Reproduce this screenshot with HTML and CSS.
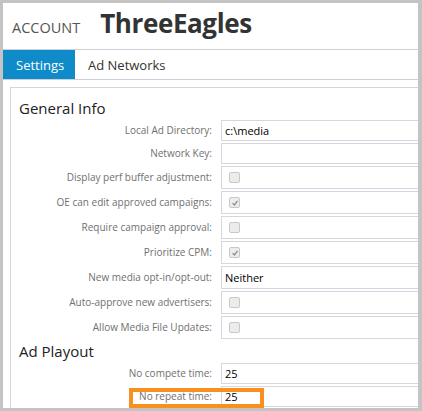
FILE: index.html
```html
<!DOCTYPE html>
<html>
<head>
<meta charset="utf-8">
<link rel="stylesheet" href="styles.css">
</head>
<body>
<div class="frame">
  <header class="header">
    <span class="account">ACCOUNT</span>
    <span class="name">ThreeEagles</span>
  </header>
  <nav class="tabs">
    <div class="tab active">Settings</div>
    <div class="tab">Ad Networks</div>
  </nav>
  <section class="panel">
    <h2 class="heading">General Info</h2>
    <div class="form">
      <div class="row short"><label>Local Ad Directory:</label><div class="field">c:\media</div></div>
      <div class="row short"><label>Network Key:</label><div class="field"></div></div>
      <div class="row"><label>Display perf buffer adjustment:</label><div class="field"><span class="cb"></span></div></div>
      <div class="row"><label>OE can edit approved campaigns:</label><div class="field"><span class="cb checked"><svg viewBox="0 0 10 10" width="8" height="8"><path d="M2 5.2 L4.2 7.4 L8.2 2.4" fill="none" stroke="#8a8a8a" stroke-width="1.6"/></svg></span></div></div>
      <div class="row"><label>Require campaign approval:</label><div class="field"><span class="cb"></span></div></div>
      <div class="row"><label>Prioritize CPM:</label><div class="field"><span class="cb checked"><svg viewBox="0 0 10 10" width="8" height="8"><path d="M2 5.2 L4.2 7.4 L8.2 2.4" fill="none" stroke="#8a8a8a" stroke-width="1.6"/></svg></span></div></div>
      <div class="row"><label>New media opt-in/opt-out:</label><div class="field">Neither</div></div>
      <div class="row"><label>Auto-approve new advertisers:</label><div class="field"><span class="cb"></span></div></div>
      <div class="row"><label>Allow Media File Updates:</label><div class="field"><span class="cb"></span></div></div>
    </div>
    <h2 class="heading playout">Ad Playout</h2>
    <div class="form">
      <div class="row short"><label>No compete time:</label><div class="field">25</div></div>
      <div class="row short highlight-row"><label>No repeat time:</label><div class="field">25</div><div class="highlight"></div></div>
    </div>
  </section>
</div>
</body>
</html>
```
FILE: styles.css
```css
html, body {
  margin: 0;
  padding: 0;
}
body {
  width: 422px;
  height: 411px;
  background: #c4c4c4;
  font-family: "Open Sans", "DejaVu Sans", sans-serif;
  overflow: hidden;
}
.frame {
  position: relative;
  margin: 3px 0 0 3px;
  width: 415px;
  height: 405px;
  background: #fff;
  overflow: hidden;
}
.header {
  height: 46px;
  display: flex;
  align-items: baseline;
  padding-left: 9px;
  box-sizing: border-box;
  padding-top: 2px;
}
.account {
  font-size: 14.5px;
  color: #555;
}
.name {
  font-size: 26px;
  font-weight: 700;
  color: #333;
  margin-left: 20px;
  letter-spacing: -0.4px;
}
.tabs {
  display: flex;
  height: 29px;
  border-top: 1px solid #cdd0db;
  border-bottom: 1px solid #cdd0db;
}
.tab {
  font-size: 13px;
  color: #333;
  display: flex;
  align-items: center;
  padding: 0 13px;
}
.tab.active {
  background: #0e8bc8;
  color: #fff;
  width: 72px;
  box-sizing: border-box;
}
.panel {
  margin: 7px 0 0 7px;
  border-top: 1px solid #d5d5de;
  border-left: 1px solid #d5d5de;
  padding: 10px 0 0 8px;
  height: 330px;
}
.heading {
  margin: 0 0 2px 0;
  font-size: 15px;
  line-height: 20px;
  font-weight: 400;
  color: #222;
}
.heading.playout {
  margin-top: 2px;
}
.form {
  display: flex;
  flex-direction: column;
  gap: 2px;
  margin-left: -8px;
}
.row {
  position: relative;
  display: flex;
  align-items: center;
  height: 23px;
}
.row.short {
  height: 21px;
}
.row label {
  flex: none;
  width: 201px;
  text-align: right;
  font-size: 10px;
  color: #707070;
  padding-bottom: 2px;
}
.field {
  flex: none;
  margin-left: 9px;
  width: 260px;
  height: 100%;
  box-sizing: border-box;
  border: 1px solid #d8d5de;
  display: flex;
  align-items: center;
  padding-left: 3px;
  font-size: 11px;
  color: #000;
}
.cb {
  width: 9px;
  height: 9px;
  margin-left: 4px;
  border: 1px solid #c8c8c8;
  border-radius: 2px;
  background: #ececec;
  display: flex;
  align-items: center;
  justify-content: center;
}
.highlight {
  position: absolute;
  left: 118px;
  top: 2px;
  width: 135px;
  height: 20px;
  border: 4px solid #f7901e;
  box-sizing: border-box;
}
```
